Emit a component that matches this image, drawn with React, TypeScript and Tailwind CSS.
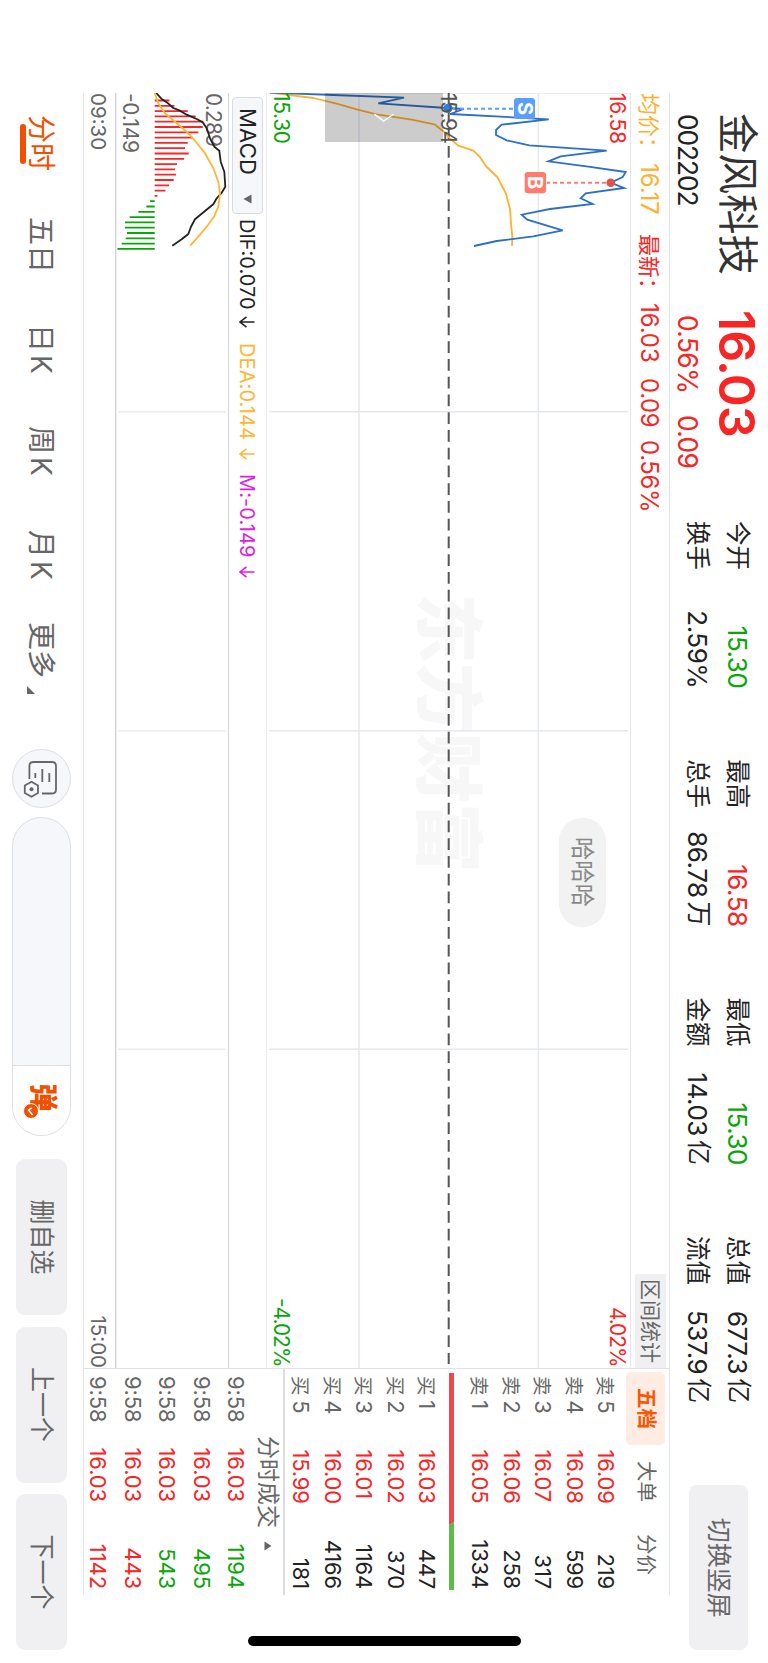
import clsx from "clsx";
import type { ReactNode } from "react";

const stats = [
  { top: ["今开", "15.30", "", "text-[#0aa50a]"], bottom: ["换手", "2.59%", ""] },
  { top: ["最高", "16.58", "", "text-[#f92424]"], bottom: ["总手", "86.78", "万"] },
  { top: ["最低", "15.30", "", "text-[#0aa50a]"], bottom: ["金额", "14.03", "亿"] },
  { top: ["总值", "677.3", "亿", "text-[#222]"], bottom: ["流值", "537.9", "亿"] },
];

const sells = [
  ["5", "16.09", "219"],
  ["4", "16.08", "599"],
  ["3", "16.07", "317"],
  ["2", "16.06", "258"],
  ["1", "16.05", "1334"],
];

const buys = [
  ["1", "16.03", "447"],
  ["2", "16.02", "370"],
  ["3", "16.01", "1164"],
  ["4", "16.00", "4166"],
  ["5", "15.99", "181"],
];

const trades = [
  { vol: "1194", up: false },
  { vol: "495", up: false },
  { vol: "543", up: false },
  { vol: "443", up: true },
  { vol: "1142", up: true },
];

const macdBars = [
  14.7, 19.7, 33, 41, 48.7, 48, 43.7, 38, 33, 30.3, 34, 29.3, 22.3, 20.3, 21.3, 19, 14.3, 10.7, 2.7,
  -4.7, -8.3, -16.3, -25, -29.7, -29.7, -27.7, -29, -33, -37.3,
];

const gridX = [411.7, 730.7, 1049.3];

function StatRow({ label, value, unit, color }: { label: string; value: string; unit: string; color?: string }) {
  return (
    <div className="flex h-[30px] items-center justify-between">
      <span className="text-[24.5px]">{label}</span>
      <span className={clsx("flex items-center text-[26px] tracking-[-0.5px]", color)}>
        {value}
        {unit && <span className="ml-[4px] text-[25px] tracking-normal">{unit}</span>}
      </span>
    </div>
  );
}

function Header() {
  return (
    <header className="flex h-[98px] shrink-0 pl-[113px]">
      <div className="w-[197px] pt-[11px]">
        <div className="text-[40.5px] leading-[40px] text-[#333]">金风科技</div>
        <div className="mt-[15px] pl-[1px] text-[26.5px] leading-[28px] tracking-[-1.2px] text-[#222]">002202</div>
      </div>
      <div className="w-[211px] text-[#f92424]">
        <div className="pt-[10px] text-[50px] font-semibold leading-[42px] tracking-[-0.8px]">16.03</div>
        <div className="mt-[14px] flex pl-[5px] text-[26.5px] leading-[28px] tracking-[-0.7px]">
          <span className="w-[100px]">0.56%</span>
          <span>0.09</span>
        </div>
      </div>
      <div className="flex gap-[71px] pt-[15px] text-[#222]">
        {stats.map((s) => (
          <div key={s.top[0]} className="flex w-[167.3px] flex-col gap-[10px]">
            <StatRow label={s.top[0]} value={s.top[1]} unit={s.top[2]} color={s.top[3]} />
            <StatRow label={s.bottom[0]} value={s.bottom[1]} unit={s.bottom[2]} />
          </div>
        ))}
      </div>
      <button className="ml-[82px] mt-[20px] h-[59px] w-[165px] rounded-[8px] bg-[#f0f0f3] pt-[1px] text-[25px] text-[#666]">
        切换竖屏
      </button>
    </header>
  );
}

function InfoBar() {
  return (
    <div className="flex h-[40px] shrink-0 items-center border-b border-[#e4e4ec] text-[24px] tracking-[-0.1px] text-[#f92424]">
      <span className="w-[70px] pt-[3px] text-[22px] text-[#ffb02e]">均价：</span>
      <span className="w-[71px] pt-[2px] text-[#ffb02e]">16.17</span>
      <span className="w-[69px] pt-[3px] text-[22px]">最新：</span>
      <span className="w-[75px] pt-[2px]">16.03</span>
      <span className="w-[62px] pt-[2px] tracking-[-0.4px]">0.09</span>
      <span className="pt-[2px] tracking-[-0.4px]">0.56%</span>
      <span className="ml-auto flex h-[31px] w-[94px] items-center justify-center bg-[#f0f0f3] text-[21px] tracking-normal text-[#666]">
        区间统计
      </span>
    </div>
  );
}

function PriceChart() {
  return (
    <svg className="block h-[363px] w-[1275px] shrink-0" viewBox="93 138 1275 363">
      <text x="593.5" y="345.5" fontSize="69.8" fontWeight="900" fill="#f7f7f7">
        东方财富
      </text>
      <path d="M93.5 138V501" stroke="#ececf0" />
      <g stroke="#e6e8f0" strokeWidth="1.5">
        {gridX.map((x) => (
          <path key={x} d={`M${x} 140V499`} />
        ))}
        <path d="M93 229.7H1368M93 409H1368" />
      </g>
      <path d="M146 319.3H1364" stroke="#555" strokeWidth="2" strokeDasharray="11.7 6.05" />
      <path d="M93 319.3H140" stroke="#555" strokeWidth="2" strokeDasharray="11.7 6.05" />
      <polyline
        fill="none"
        stroke="#ffb02e"
        strokeWidth="1.8"
        strokeLinejoin="round"
        points="92.7,498 98,454.7 103.7,431.3 109.3,411.3 114.3,391.3 119.7,356.3 124.3,333.7 130.7,325.3 138.3,318 145.7,309.7 150.7,294.7 156.3,288.7 167,281.3 177,270.7 193.7,262 209,258 223.3,257 236.7,255.7 246,256"
      />
      <polyline
        fill="none"
        stroke="#2b6fc6"
        strokeWidth="1.8"
        points="92.7,498 95,434.7 97.7,364 103.3,389.7 108,321.3 109,304 114,318 119.3,219.3 124.7,266.3 130,272 135,272 140.3,261.3 145.3,238.7 150.7,161.3 156.3,207.3 161.3,219.7 166.7,179.7 172,142.3 177,145.3 182.7,157.3 188,144 193.3,182.3 198.3,187.3 204,175.3 209,218 214.7,246.3 219.7,240.7 230.3,205.3 236.3,234.7 241,271.3 246,294"
      />
      <rect x="93" y="325" width="49" height="118" fill="#000" fillOpacity="0.2" />
      <path d="M114 393.7L121 384.3L114 374.3" fill="none" stroke="#fff" strokeWidth="1.5" />

      <circle cx="108.3" cy="320" r="4.5" fill="#2f7fe8" />
      <path d="M108.7 315V255" stroke="#5a9eff" strokeWidth="2" strokeDasharray="4 3" />
      <rect x="98" y="233" width="21" height="21" rx="3" fill="#5a9eff" />
      <text x="108.5" y="250.5" textAnchor="middle" fontSize="20" fontWeight="700" fill="#fff">
        S
      </text>
      <circle cx="182.7" cy="157.3" r="4.3" fill="#e2504c" />
      <path d="M182.7 162V221" stroke="#ff7b6e" strokeWidth="2" strokeDasharray="4 3" />
      <rect x="172" y="222" width="21.3" height="21.3" rx="3" fill="#ff7b6e" />
      <text x="182.7" y="240" textAnchor="middle" fontSize="20" fontWeight="700" fill="#fff">
        B
      </text>

      <g fontSize="21">
        <text x="93" y="158.3" textLength="51" fill="#f92424">16.58</text>
        <text x="93" y="326.7" textLength="51" fill="#555">15.94</text>
        <text x="93" y="494" textLength="51" fill="#0aa50a">15.30</text>
        <text x="1307" y="158.3" textLength="60.5" fill="#f92424">4.02%</text>
        <text x="1298" y="494" textLength="69.5" fill="#0aa50a">-4.02%</text>
      </g>

      <rect x="817.7" y="162" width="109.6" height="47" rx="23.5" fill="#f2f2f2" />
      <text x="872" y="193.8" textAnchor="middle" fontSize="23.3" fill="#888">
        哈哈哈
      </text>
    </svg>
  );
}

function DownArrow() {
  return (
    <svg className="shrink-0" width="12" height="16" viewBox="0 0 12 16" fill="none" stroke="currentColor" strokeWidth="1.6">
      <path d="M6 0.5V15M0.8 8.5L6 15L11.2 8.5" />
    </svg>
  );
}

function MacdHeader() {
  return (
    <div className="flex h-[39px] shrink-0 items-center border-b border-t border-b-[#d3d3dc] border-t-[#ececf0] pl-[4px] text-[20px]">
      <div className="flex h-[31px] w-[117px] items-center rounded-[4px] border border-[#d9dbe2] bg-[#f6f7fa] pl-[10px] text-[22px] text-[#222]">
        <span className="w-[86px] tracking-[0.2px]">MACD</span>
        <svg width="10" height="9" viewBox="0 0 10 9">
          <path d="M0.5 0.5H9.5L5 8.5Z" fill="#666" />
        </svg>
      </div>
      <div className="flex w-[124px] items-center pl-[5px] text-[#222]">
        <span className="w-[97px]">DIF:0.070</span>
        <DownArrow />
      </div>
      <div className="flex w-[131px] items-center pl-[5px] text-[#ffb636]">
        <span className="w-[105px] tracking-[0.1px]">DEA:0.144</span>
        <DownArrow />
      </div>
      <div className="flex items-center pl-[5px] text-[#e31ce3]">
        <span className="w-[92px] tracking-[0.1px]">M:-0.149</span>
        <DownArrow />
      </div>
    </div>
  );
}

function MacdChart() {
  return (
    <svg className="block h-[113px] w-[1275px] shrink-0" viewBox="93 540 1275 113">
      <path d="M93 652.3H1368" stroke="#d3d3dc" strokeWidth="1.4" />
      <g stroke="#ececf2" strokeWidth="1.4">
        {gridX.map((x) => (
          <path key={x} d={`M${x} 542V650`} />
        ))}
      </g>
      {macdBars.map((h, i) => {
        const x = 100.5 + i * 5.3;
        return <path key={i} d={`M${x} 613.3V${613.3 - h}`} stroke={h > 0 ? "#f92424" : "#0aa50a"} strokeWidth="1.8" />;
      })}
      <g fontSize="21" fill="#666">
        <text x="93" y="562.3" textLength="54">0.289</text>
        <text x="93" y="645.3" textLength="60">-0.149</text>
      </g>
      <g fill="none" strokeWidth="1.8" strokeLinejoin="round">
        <polyline
          stroke="#222"
          points="92.7,612 99,606.3 102.7,600.7 108,594.7 110.7,588 114.7,581.3 119,571.3 122.3,565.3 128.3,561.3 138.3,558 146.7,553.7 150.7,548.7 161.7,547.3 171.7,543.7 186.7,542.7 192.7,546.3 198.3,551.3 204.3,554.7 211,563 219.3,573 226.7,577 234,579.7 239.3,586.3 245.7,595.7"
        />
        <polyline
          stroke="#ffb636"
          points="92.7,613.3 103.3,609.7 113.3,603 121.7,593 131.7,581.3 142.7,571.3 153.3,563 168.3,554.7 181.7,549.7 193.3,548 206.7,549.7 216.7,554 226.7,561.3 236.7,569.7 245.7,577.7"
        />
      </g>
    </svg>
  );
}

function QuoteRow({ side, row }: { side: string; row: string[] }) {
  return (
    <div className="flex h-[31.5px] shrink-0 items-center pl-[7px] pr-[6px] text-[22px] tracking-[-0.2px]">
      <span className="w-[73.5px] text-[#666]">
        <span className="mr-[5px] text-[19.5px]">{side}</span>
        {row[0]}
      </span>
      <span className="text-[#f92424]">{row[1]}</span>
      <span className="ml-auto text-[#222]">{row[2]}</span>
    </div>
  );
}

function OrderBook() {
  return (
    <aside className="flex w-[227px] flex-col border-l border-[#e0e0e8]">
      <div className="flex h-[47.25px] shrink-0 pl-[3px] pt-[4px] text-[20.5px] text-[#666]">
        <span className="flex h-[39px] w-[73px] items-center justify-center rounded-[5px] bg-[#ffede4] font-bold text-[#ff5500]">
          五档
        </span>
        <span className="flex h-[39px] w-[73px] items-center justify-center">大单</span>
        <span className="flex h-[39px] w-[73px] items-center justify-center">分价</span>
      </div>
      {sells.map((r) => (
        <QuoteRow key={r[0]} side="卖" row={r} />
      ))}
      <svg className="mb-[7px] ml-[4px] mt-[9.75px] block h-[5px] w-[217px] shrink-0" viewBox="0 0 217 5">
        <path d="M0 0H149L152 5H0Z" fill="#f04848" />
        <path d="M149 0H217V5H152Z" fill="#5cbc45" />
      </svg>
      {buys.map((r) => (
        <QuoteRow key={r[0]} side="买" row={r} />
      ))}
      <div className="flex h-[31.75px] shrink-0 items-center border-t-2 border-[#dcdce4] pl-[67px] text-[23px] text-[#666]">
        分时成交
        <svg className="ml-[13px]" width="10" height="8" viewBox="0 0 10 8">
          <path d="M0.5 7.5H9.5L5 0.5Z" fill="#666" />
        </svg>
      </div>
      {trades.map((t) => (
        <div key={t.vol} className="flex h-[34.5px] shrink-0 items-center pl-[7px] pr-[6px] text-[22px] tracking-[-0.1px]">
          <span className="w-[71.5px] text-[#666]">9:58</span>
          <span className="text-[#f92424]">16.03</span>
          <span className={clsx("ml-auto", t.up ? "text-[#f92424]" : "text-[#0aa50a]")}>{t.vol}</span>
        </div>
      ))}
    </aside>
  );
}

function Tab({ className, children }: { className?: string; children: ReactNode }) {
  return <span className={clsx("flex h-[40px] items-center gap-[3px] whitespace-nowrap", className)}>{children}</span>;
}

function ActionButton({ children }: { children: ReactNode }) {
  return (
    <button className="h-[51px] w-[156px] rounded-[9px] bg-[#f0f0f3] text-[25px] text-[#666]">{children}</button>
  );
}

function Footer() {
  return (
    <footer className="flex h-[83px] shrink-0 pl-[115px] pt-[12px] text-[28px] text-[#666]">
      <div className="flex w-[634px] pt-[10px]">
        <div className="w-[102px]">
          <Tab className="text-[#f05000]">分时</Tab>
          <div className="-mt-[5px] ml-[9px] h-[5.5px] w-[40px] rounded-full bg-[#f05000]" />
        </div>
        <Tab className="w-[107px]">五日</Tab>
        <Tab className="w-[102px]">
          日<span>K</span>
        </Tab>
        <Tab className="w-[104px]">
          周<span>K</span>
        </Tab>
        <Tab className="w-[92px]">
          月<span>K</span>
        </Tab>
        <Tab>
          更多
          <svg className="ml-[5px] mt-[19px]" width="8" height="8" viewBox="0 0 8 8">
            <path d="M8 0V8H0Z" fill="#666" />
          </svg>
        </Tab>
      </div>
      <div className="flex h-[59px] w-[59px] items-center justify-center rounded-full border border-[#dcdee5] bg-[#f6f7fa]">
        <svg width="38" height="36" viewBox="760 709 38 36" fill="none" stroke="#666" strokeWidth="1.8">
          <path d="M779 738.6H766Q762 738.6 762 734.6V716Q762 712 766 712H789.5Q793.5 712 793.5 716V726" />
          <path d="M773 732.7H778M769 725.7H782M773 718.7H782" />
          <path d="M781.8 736.5L785.5 730H793L796.7 736.5L793 743.2H785.5Z" />
          <circle cx="789.3" cy="736.5" r="2" fill="#666" stroke="none" />
        </svg>
      </div>
      <div className="ml-[9px] flex h-[59px] w-[319px] overflow-hidden rounded-full border border-[#dcdee5] bg-[#f6f7fa]">
        <div className="relative ml-auto w-[70.5px] border-l border-[#dcdee5] bg-white pl-[18px] pt-[13px] text-[28px] font-black leading-[28px] text-[#f05000]">
          弹
          <svg className="absolute left-[37px] top-[31px]" width="16" height="16" viewBox="0 0 16 16">
            <circle cx="8" cy="8" r="7.5" fill="#f05000" stroke="#fff" />
            <path d="M4.8 7.2L7.2 10.4L12 6.4" fill="none" stroke="#fff" strokeWidth="1.6" />
          </svg>
        </div>
      </div>
      <div className="ml-[23px] flex gap-[11.5px] pt-[4px]">
        <ActionButton>删自选</ActionButton>
        <ActionButton>上一个</ActionButton>
        <ActionButton>下一个</ActionButton>
      </div>
    </footer>
  );
}

export default function App() {
  return (
    <div className="h-[1663px] w-[768px] overflow-hidden bg-white">
      {/* landscape screen, turned clockwise */}
      <div className="flex h-[768px] w-[1663px] origin-top-left translate-x-[768px] rotate-90 flex-col whitespace-nowrap bg-white font-['Inter','Noto_Sans_CJK_SC',sans-serif]">
        <Header />
        <div className="flex h-[587px] shrink-0 pl-[93px]">
          <div className="flex border-y border-[#e4e4ec]">
            <div className="-my-px flex w-[1275px] flex-col">
              <InfoBar />
              <PriceChart />
              <MacdHeader />
              <MacdChart />
              <div className="flex h-[32px] items-center justify-between pt-[2px] text-[20.5px] text-[#666]">
                <span>09:30</span>
                <span>15:00</span>
              </div>
            </div>
            <OrderBook />
          </div>
          <div className="pl-[41px] pt-[149px]">
            <div className="h-[273px] w-[10px] rounded-full bg-black" />
          </div>
        </div>
        <Footer />
      </div>
    </div>
  );
}
